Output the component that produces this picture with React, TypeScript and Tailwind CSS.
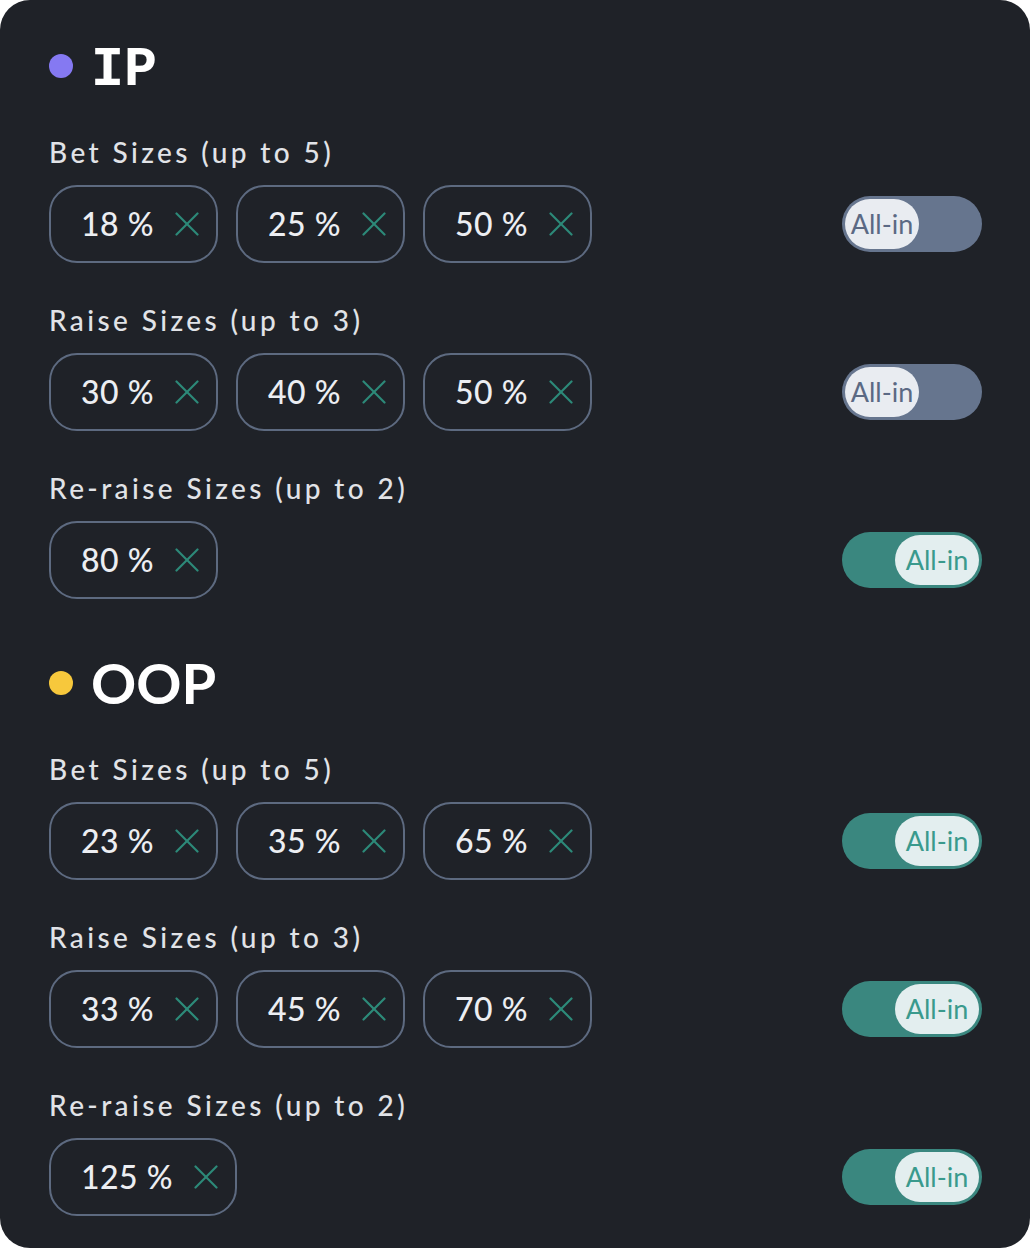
import { useState } from "react";

type Group = {
  label: string;
  sizes: number[];
  allIn: boolean;
};

type Player = {
  name: string;
  dot: string;
  mono?: boolean;
  groups: Group[];
};

const players: Player[] = [
  {
    name: "IP",
    dot: "bg-[#8579f2]",
    mono: true,
    groups: [
      { label: "Bet Sizes (up to 5)", sizes: [18, 25, 50], allIn: false },
      { label: "Raise Sizes (up to 3)", sizes: [30, 40, 50], allIn: false },
      { label: "Re-raise Sizes (up to 2)", sizes: [80], allIn: true },
    ],
  },
  {
    name: "OOP",
    dot: "bg-[#f7c83c]",
    groups: [
      { label: "Bet Sizes (up to 5)", sizes: [23, 35, 65], allIn: true },
      { label: "Raise Sizes (up to 3)", sizes: [33, 45, 70], allIn: true },
      { label: "Re-raise Sizes (up to 2)", sizes: [125], allIn: true },
    ],
  },
];

function RemoveIcon() {
  return (
    <svg width="24" height="24" viewBox="0 0 24 24" fill="none" stroke="#2d8a79" strokeWidth="2.2" strokeLinecap="round">
      <path d="M1.5 1.5 22.5 22.5" />
      <path d="M22.5 1.5 1.5 22.5" />
    </svg>
  );
}

function SizeChip({ value }: { value: number }) {
  return (
    <div className="inline-flex h-[78px] items-center gap-[21px] rounded-[28px] border-2 border-[#5d6a80] pl-[30px] pr-[17px]">
      <span className="text-[32px] font-medium tracking-[0.5px] text-[#eceef2]">{value} %</span>
      <RemoveIcon />
    </div>
  );
}

function AllInToggle({ on }: { on: boolean }) {
  const [checked, setChecked] = useState(on);
  return (
    <button
      onClick={() => setChecked(!checked)}
      className={
        checked
          ? "flex h-[56px] w-[140px] items-center justify-end rounded-full bg-[#3a877f] p-[3px]"
          : "flex h-[56px] w-[140px] items-center justify-start rounded-full bg-[#66758e] p-[3px]"
      }
    >
      {checked ? (
        <span className="flex h-full w-[84px] items-center justify-center rounded-full bg-[#e3eeef] text-[27px] text-[#3a9a8d]">
          All-in
        </span>
      ) : (
        <span className="flex h-full w-[74px] items-center justify-center rounded-full bg-[#e9ecf1] text-[27px] text-[#5b6984]">
          All-in
        </span>
      )}
    </button>
  );
}

export default function App() {
  return (
    <div className="min-h-screen bg-white font-['Lato','Noto_Sans',sans-serif]">
      <div className="h-[1248px] rounded-[30px] bg-[#1f2228] pl-[49px] pr-[48px] pt-[36px]">
        {players.map((p, pi) => (
          <section key={p.name} className={pi > 0 ? "mt-[54px]" : ""}>
            <div className="flex h-[60px] items-center gap-[18px]">
              <span className={`h-[24px] w-[24px] rounded-full ${p.dot}`} />
              {p.mono ? (
                <h2 className="pt-[8px] font-['Liberation_Mono',monospace] text-[55px] font-bold leading-none text-white">
                  {p.name}
                </h2>
              ) : (
                <h2 className="text-[56px] font-bold leading-none text-white">{p.name}</h2>
              )}
            </div>
            <div className="mt-[39px] flex flex-col gap-[40px]">
              {p.groups.map((g) => (
                <div key={g.label}>
                  <div className="text-[28px] font-medium leading-[34px] tracking-[3.4px] text-[#e1e3e7]">{g.label}</div>
                  <div className="mt-[16px] flex items-center justify-between">
                    <div className="flex gap-[18px]">
                      {g.sizes.map((s) => (
                        <SizeChip key={s} value={s} />
                      ))}
                    </div>
                    <AllInToggle on={g.allIn} />
                  </div>
                </div>
              ))}
            </div>
          </section>
        ))}
      </div>
    </div>
  );
}
